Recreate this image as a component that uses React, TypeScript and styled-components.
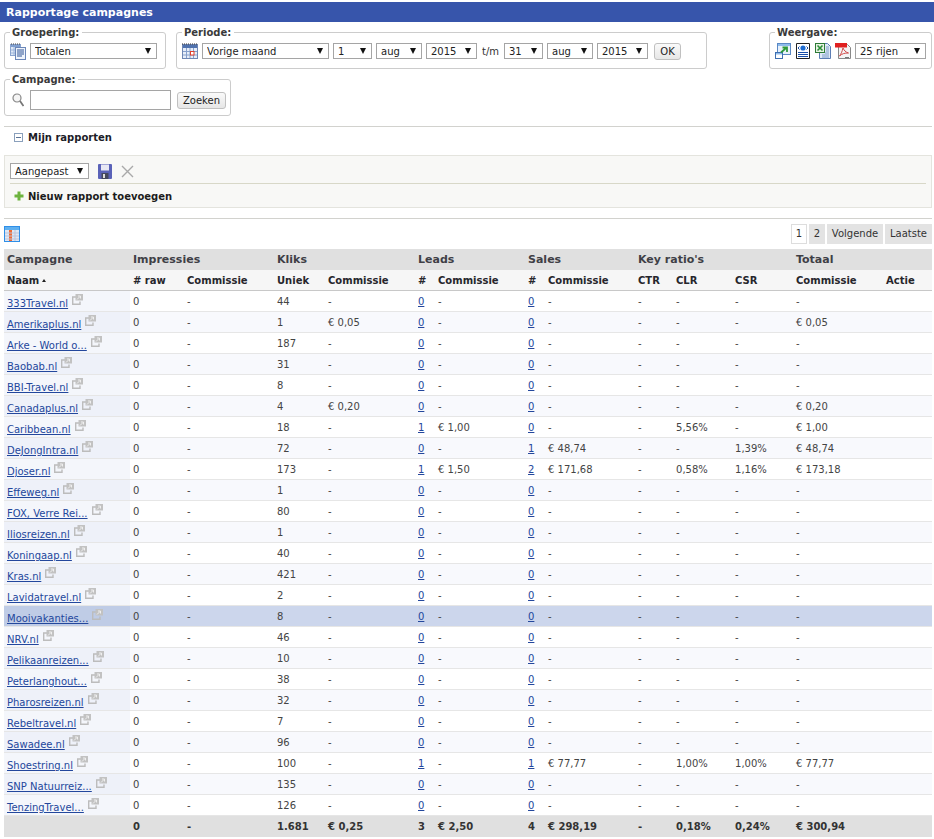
import React from 'react';
import styled, { createGlobalStyle } from 'styled-components';

const GlobalStyle = createGlobalStyle`
  html, body { margin: 0; padding: 0; background: #fff; }
  body { font-family: "DejaVu Sans", Verdana, sans-serif; font-size: 10px; color: #333; }
`;

const Page = styled.div`
  padding-top: 2px;
  width: 934px;
`;

const TitleBar = styled.h1`
  margin: 0;
  height: 20px;
  background: #3755ab;
  color: #fff;
  font-size: 11px;
  line-height: 21px;
  padding-left: 6px;
  font-weight: bold;
`;

const Content = styled.div`
  padding: 0 2px 0 4px;
`;

const FilterRow = styled.div`
  display: flex;
  gap: 10px;
  margin-top: 5px;
`;

const Group = styled.fieldset`
  box-sizing: border-box;
  width: ${p => p.$width}px;
  height: 42px;
  margin: 0;
  margin-left: ${p => (p.$push ? 'auto' : '0')};
  padding: 0 5px;
  border: 1px solid #ccc;
  border-radius: 3px;
  display: flex;
  align-items: center;
  min-width: 0;
`;

const Legend = styled.legend`
  font-weight: bold;
  font-size: 10px;
  color: #3a3a3a;
  padding: 0 3px 0 2px;
  line-height: 11px;
  height: 11px;
`;

const Controls = styled.div`
  display: flex;
  align-items: center;
  gap: ${p => p.$gap ?? 4}px;
  margin-top: ${p => p.$lift ?? -4}px;
`;

const SelectWrap = styled.span`
  position: relative;
  display: inline-block;
  width: ${p => p.$width}px;
  height: 16px;
  &::after {
    content: '';
    position: absolute;
    right: 6px;
    top: 5px;
    border-left: 3.5px solid transparent;
    border-right: 3.5px solid transparent;
    border-top: 6px solid #111;
    pointer-events: none;
  }
`;

const NativeSelect = styled.select`
  appearance: none;
  box-sizing: border-box;
  width: 100%;
  height: 100%;
  display: block;
  margin: 0;
  padding: 0 0 0 4px;
  border: 1px solid #a5a5a5;
  border-radius: 0;
  background: #fff;
  color: #222;
  font: 10px "DejaVu Sans", Verdana, sans-serif;
`;

const Button = styled.button`
  box-sizing: border-box;
  height: 17px;
  width: ${p => p.$width}px;
  margin: 0 0 0 ${p => p.$left || 0}px;
  padding: 0;
  border: 1px solid #c0c0c0;
  border-radius: 3px;
  background: linear-gradient(#fafafa, #e6e6e6);
  color: #222;
  font: 10px "DejaVu Sans", Verdana, sans-serif;
`;

const SearchInput = styled.input`
  box-sizing: border-box;
  width: 141px;
  height: 20px;
  margin: 0;
  border: 1px solid #a5a5a5;
  background: #fff;
`;

const SearchGlyph = styled.svg`
  margin-left: 2px;
`;

const Until = styled.span`
  color: #333;
  width: 19px;
  text-align: center;
`;

const Rule = styled.hr`
  border: 0;
  border-top: 1px solid #d2d2ce;
  margin: 10px 0 0;
  height: 0;
`;

const SectionHead = styled.div`
  display: flex;
  align-items: center;
  gap: 5px;
  height: 20px;
  padding-left: 10px;
  font-weight: bold;
  font-size: 10px;
  color: #1c1c28;
`;

const ReportPanel = styled.div`
  box-sizing: border-box;
  height: 53px;
  margin-top: 8px;
  padding: 7px 5px 0;
  background: #f8f8f6;
  border: 1px solid #e4e4de;
`;

const PanelRow = styled.div`
  display: flex;
  align-items: center;
  gap: 9px;
  height: 16px;
  padding-bottom: 4px;
  border-bottom: 1px solid #d8d8c8;
`;

const AddLink = styled.div`
  display: flex;
  align-items: center;
  gap: 4px;
  height: 24px;
  padding-left: 4px;
  font-weight: bold;
  font-size: 10px;
  color: #1c1c1c;
`;

const TableBar = styled.div`
  display: flex;
  justify-content: space-between;
  align-items: center;
  height: 30px;
`;

const Pager = styled.div`
  display: flex;
  gap: 2px;
`;

const PageLink = styled.span`
  box-sizing: border-box;
  width: ${p => p.$width}px;
  height: 20px;
  line-height: 18px;
  text-align: center;
  font-size: 10px;
  color: #333;
  background: ${p => (p.$active ? '#fff' : '#e3e3e3')};
  border: 1px solid ${p => (p.$active ? '#ddd' : '#e3e3e3')};
`;

const Table = styled.table`
  width: 928px;
  table-layout: fixed;
  border-collapse: collapse;
  border-spacing: 0;
  font-size: 10px;
`;

const GroupHead = styled.th`
  height: 21px;
  padding: 0 3px;
  background: #e0e0e0;
  color: #3f3f46;
  font-size: 11px;
  font-weight: bold;
  text-align: left;
`;

const SubHead = styled.th`
  height: 20px;
  padding: 0 3px;
  background: #f6f6f6;
  border-bottom: 1px solid #c8c8c8;
  color: #26262c;
  font-size: 10px;
  font-weight: bold;
  text-align: left;
  white-space: nowrap;
`;

const SortMark = styled.span`
  display: inline-block;
  margin-left: 3px;
  vertical-align: 2px;
  border-left: 2.5px solid transparent;
  border-right: 2.5px solid transparent;
  border-bottom: 3px solid #222;
`;

const Row = styled.tr`
  background: ${p => (p.$hot ? '#ccd6ec' : p.$even ? '#f8f9fd' : '#fff')};
`;

const Cell = styled.td`
  box-sizing: border-box;
  height: 21px;
  padding: 0 3px;
  border-bottom: 1px solid #e6e6e6;
  color: #444;
  white-space: nowrap;
`;

const NameCell = styled(Cell)`
  background: ${p => (p.$hot ? '#bfcce6' : p.$even ? '#eef1f9' : '#f4f6fb')};
  padding-top: 1px;
`;

const NameLink = styled.a`
  color: #23479c;
  text-decoration: underline;
`;

const External = styled.svg`
  margin-left: 4px;
  vertical-align: 2px;
`;

const CountLink = styled.a`
  color: #23479c;
  text-decoration: underline;
`;

const FootCell = styled.td`
  height: 21px;
  padding: 0 3px;
  background: #e0e0e0;
  border-top: 1px solid #c4c4c4;
  color: #333;
  font-weight: bold;
  white-space: nowrap;
`;

const ReportIcon = () => (
  <svg width="16" height="17" viewBox="0 0 16 17">
    <rect x="0.5" y="1.5" width="10" height="11" fill="#dfe9f7" stroke="#8aa4cf" />
    <path d="M1 1h10" stroke="#444" strokeDasharray="1 1" />
    <rect x="1" y="2" width="9" height="2" fill="#7f9fd0" />
    <path d="M4 4v8M7 4v8M1 7h9M1 10h9" stroke="#9db5da" />
    <rect x="5.500" y="4.500" width="10" height="12" fill="#eef3fb" stroke="#6a86b8" />
    <path d="M7 7h7M7 9h7M7 11h7M7 13h5" stroke="#2e5596" strokeWidth="1.100" />
  </svg>
);

const CalendarIcon = () => (
  <svg width="16" height="16" viewBox="0 0 16 16">
    <rect x="0.5" y="1.5" width="15" height="14" fill="#e6edf8" stroke="#6f87b4" />
    <rect x="1" y="2" width="14" height="3" fill="#4f72ae" />
    <path d="M0 1h16" stroke="#333" strokeDasharray="1 1" />
    <path d="M4.5 5v10M8 5v10M11.5 5v10M1 8.5h14M1 12h14" stroke="#86a0cc" />
    <rect x="8.500" y="8.500" width="3.500" height="3.500" fill="#fff" stroke="#e0402c" />
  </svg>
);

const SearchIcon = () => (
  <SearchGlyph width="12" height="14" viewBox="0 0 12 14">
    <circle cx="5" cy="5" r="4" fill="#f5f5f5" stroke="#888" strokeWidth="1.2" />
    <path d="M8 8l3.500 5" stroke="#777" strokeWidth="1.800" />
  </SearchGlyph>
);

const WindowIcon = () => (
  <svg width="16" height="16" viewBox="0 0 16 16">
    <rect x="2.500" y="0.500" width="13" height="11" fill="#e8f1fb" stroke="#5a88c4" />
    <rect x="3" y="1" width="12" height="2" fill="#8fbcec" />
    <rect x="0.500" y="9.500" width="7" height="6" fill="#fff" stroke="#3f6fb0" />
    <rect x="1" y="10" width="6" height="1.500" fill="#8fbcec" />
    <path d="M6 9.500l5-4.500M7.500 4.500h4.500V9" stroke="#2e9a3a" strokeWidth="1.800" fill="none" />
  </svg>
);

const WebIcon = () => (
  <svg width="16" height="16" viewBox="0 0 16 16">
    <path d="M1.500 .5h13v15h-13z" fill="#fff" stroke="#222" />
    <circle cx="8" cy="5" r="2.600" fill="#1b6ad0" />
    <path d="M3 5l1.500-1.500M3 5l1.500 1.500M13 5l-1.500-1.500M13 5l-1.500 1.500" stroke="#1b4fa8" />
    <path d="M3 9.500h10M3 11.500h10M3 13.500h10" stroke="#1b4fa8" />
  </svg>
);

const ExcelIcon = () => (
  <svg width="16" height="16" viewBox="0 0 16 16">
    <path d="M4.500 .5h8l3 3v12h-11z" fill="#dfe9f6" stroke="#5b7db4" />
    <path d="M10 10h4M7 12h7M7 14h7M11 4h3M11 6h3M11 8h3" stroke="#7c9cc8" />
    <rect x="0.500" y="0.500" width="9" height="9" fill="#e8f2e4" stroke="#2c7a35" />
    <path d="M2.500 2.500l5 5M7.500 2.500l-5 5" stroke="#2c8f38" strokeWidth="1.600" />
  </svg>
);

const PdfIcon = () => (
  <svg width="16" height="16" viewBox="0 0 16 16">
    <path d="M3.500 1.500h9l3 3v11h-12z" fill="#f4f4f4" stroke="#888" />
    <rect x="0" y="0" width="12" height="4.500" fill="#e02020" />
    <path d="M8 5c-1 4-2 6-3.500 8 3-2.500 5-3 9-3-3-1-4.500-2.500-5.500-5z" fill="none" stroke="#d04a4a" />
    <path d="M10 14.500h4" stroke="#777" />
  </svg>
);

const MinusBox = () => (
  <svg width="9" height="9" viewBox="0 0 9 9">
    <rect x="0.5" y="0.5" width="8" height="8" fill="#fff" stroke="#8aa0bc" />
    <path d="M2 4.500h5" stroke="#5a7396" />
  </svg>
);

const SaveIcon = () => (
  <svg width="14" height="15" viewBox="0 0 14 15">
    <rect x="0" y="0" width="14" height="15" rx="1" fill="#5a62b8" />
    <rect x="3" y="0.500" width="8" height="6" fill="#e8e8f4" />
    <rect x="3.500" y="9" width="7" height="6" fill="#44485c" />
    <rect x="5" y="10" width="2" height="4" fill="#ddd" />
  </svg>
);

const CrossIcon = () => (
  <svg width="13" height="13" viewBox="0 0 13 13">
    <path d="M1 1l11 11M12 1L1 12" stroke="#a9a9a9" strokeWidth="1.400" />
  </svg>
);

const PlusIcon = () => (
  <svg width="10" height="10" viewBox="0 0 10 10">
    <path d="M5 .5v9M.5 5h9" stroke="#6db33f" strokeWidth="3" />
  </svg>
);

const ColumnsIcon = () => (
  <svg width="16" height="16" viewBox="0 0 16 16">
    <rect x="0.500" y="0.500" width="15" height="15" fill="#dfe6f2" stroke="#2f8fe8" />
    <rect x="1" y="1" width="14" height="3" fill="#5fb0f0" />
    <rect x="5" y="4" width="3" height="11" fill="#ef6a35" />
    <path d="M11 4v11M1 7h14M1 10h14M1 13h14" stroke="#b9c3dc" />
  </svg>
);

const ExternalIcon = () => (
  <External width="11" height="11" viewBox="0 0 11 11">
    <path d="M4 3H.7v7.300H8V7.500" fill="none" stroke="#bcbcbc" strokeWidth="1.400" />
    <rect x="3.500" y="0" width="7.500" height="6.500" fill="#c2c2c2" />
    <path d="M5 5.500l3-3M6 2h2.500v2.500" stroke="#efefef" strokeWidth="1" fill="none" />
  </External>
);

const colWidths = [126, 54, 90, 51, 90, 20, 90, 20, 90, 38, 59, 61, 90, 49];

type CampaignRow = {
  name: string;
  clicks: string;
  clickFee?: string;
  leads?: string;
  leadFee?: string;
  sales?: string;
  saleFee?: string;
  clr?: string;
  csr?: string;
  total?: string;
};

const rows: CampaignRow[] = [
  { name: '333Travel.nl', clicks: '44' },
  { name: 'Amerikaplus.nl', clicks: '1', clickFee: '€ 0,05', total: '€ 0,05' },
  { name: 'Arke - World o...', clicks: '187' },
  { name: 'Baobab.nl', clicks: '31' },
  { name: 'BBI-Travel.nl', clicks: '8' },
  { name: 'Canadaplus.nl', clicks: '4', clickFee: '€ 0,20', total: '€ 0,20' },
  { name: 'Caribbean.nl', clicks: '18', leads: '1', leadFee: '€ 1,00', clr: '5,56%', total: '€ 1,00' },
  { name: 'DeJongIntra.nl', clicks: '72', sales: '1', saleFee: '€ 48,74', csr: '1,39%', total: '€ 48,74' },
  { name: 'Djoser.nl', clicks: '173', leads: '1', leadFee: '€ 1,50', sales: '2', saleFee: '€ 171,68', clr: '0,58%', csr: '1,16%', total: '€ 173,18' },
  { name: 'Effeweg.nl', clicks: '1' },
  { name: 'FOX, Verre Rei...', clicks: '80' },
  { name: 'Iliosreizen.nl', clicks: '1' },
  { name: 'Koningaap.nl', clicks: '40' },
  { name: 'Kras.nl', clicks: '421' },
  { name: 'Lavidatravel.nl', clicks: '2' },
  { name: 'Mooivakanties...', clicks: '8' },
  { name: 'NRV.nl', clicks: '46' },
  { name: 'Pelikaanreizen...', clicks: '10' },
  { name: 'Peterlanghout...', clicks: '38' },
  { name: 'Pharosreizen.nl', clicks: '32' },
  { name: 'Rebeltravel.nl', clicks: '7' },
  { name: 'Sawadee.nl', clicks: '96' },
  { name: 'Shoestring.nl', clicks: '100', leads: '1', sales: '1', saleFee: '€ 77,77', clr: '1,00%', csr: '1,00%', total: '€ 77,77' },
  { name: 'SNP Natuurreiz...', clicks: '135' },
  { name: 'TenzingTravel...', clicks: '126' },
];

const Select = ({ value, width }: { value: string; width: number }) => (
  <SelectWrap $width={width}>
    <NativeSelect defaultValue={value}>
      <option>{value}</option>
    </NativeSelect>
  </SelectWrap>
);

export default function App() {
  return (
    <Page>
      <GlobalStyle />
      <TitleBar>Rapportage campagnes</TitleBar>
      <Content>
        <FilterRow>
          <Group $width={162}>
            <Legend>Groepering:</Legend>
            <Controls>
              <ReportIcon />
              <Select value="Totalen" width={127} />
            </Controls>
          </Group>
          <Group $width={531}>
            <Legend>Periode:</Legend>
            <Controls>
              <CalendarIcon />
              <Select value="Vorige maand" width={127} />
              <Select value="1" width={39} />
              <Select value="aug" width={46} />
              <Select value="2015" width={51} />
              <Until>t/m</Until>
              <Select value="31" width={39} />
              <Select value="aug" width={46} />
              <Select value="2015" width={51} />
              <Button $width={27} $left={2}>OK</Button>
            </Controls>
          </Group>
          <Group $width={163} $push>
            <Legend>Weergave:</Legend>
            <Controls>
              <WindowIcon />
              <WebIcon />
              <ExcelIcon />
              <PdfIcon />
              <Select value="25 rijen" width={71} />
            </Controls>
          </Group>
        </FilterRow>
        <FilterRow>
          <Group $width={227}>
            <Legend>Campagne:</Legend>
            <Controls $gap={6} $lift={0}>
              <SearchIcon />
              <SearchInput />
              <Button $width={49}>Zoeken</Button>
            </Controls>
          </Group>
        </FilterRow>
        <Rule />
        <SectionHead>
          <MinusBox />
          Mijn rapporten
        </SectionHead>
        <ReportPanel>
          <PanelRow>
            <Select value="Aangepast" width={79} />
            <SaveIcon />
            <CrossIcon />
          </PanelRow>
          <AddLink>
            <PlusIcon />
            Nieuw rapport toevoegen
          </AddLink>
        </ReportPanel>
        <Rule />
        <TableBar>
          <ColumnsIcon />
          <Pager>
            <PageLink $active $width={16}>1</PageLink>
            <PageLink $width={16}>2</PageLink>
            <PageLink $width={56}>Volgende</PageLink>
            <PageLink $width={47}>Laatste</PageLink>
          </Pager>
        </TableBar>
        <Table>
          <colgroup>
            {colWidths.map((w, i) => (
              <col key={i} width={w} />
            ))}
          </colgroup>
          <thead>
            <tr>
              <GroupHead>Campagne</GroupHead>
              <GroupHead colSpan={2}>Impressies</GroupHead>
              <GroupHead colSpan={2}>Kliks</GroupHead>
              <GroupHead colSpan={2}>Leads</GroupHead>
              <GroupHead colSpan={2}>Sales</GroupHead>
              <GroupHead colSpan={3}>Key ratio's</GroupHead>
              <GroupHead colSpan={2}>Totaal</GroupHead>
            </tr>
            <tr>
              <SubHead>Naam<SortMark /></SubHead>
              <SubHead># raw</SubHead>
              <SubHead>Commissie</SubHead>
              <SubHead>Uniek</SubHead>
              <SubHead>Commissie</SubHead>
              <SubHead>#</SubHead>
              <SubHead>Commissie</SubHead>
              <SubHead>#</SubHead>
              <SubHead>Commissie</SubHead>
              <SubHead>CTR</SubHead>
              <SubHead>CLR</SubHead>
              <SubHead>CSR</SubHead>
              <SubHead>Commissie</SubHead>
              <SubHead>Actie</SubHead>
            </tr>
          </thead>
          <tbody>
            {rows.map((r, i) => {
              const even = i % 2 === 1;
              const hot = r.name.startsWith('Mooivakanties');
              return (
                <Row key={r.name} $even={even} $hot={hot}>
                  <NameCell $even={even} $hot={hot}>
                    <NameLink href="#">{r.name}</NameLink>
                    <ExternalIcon />
                  </NameCell>
                  <Cell>0</Cell>
                  <Cell>-</Cell>
                  <Cell>{r.clicks}</Cell>
                  <Cell>{r.clickFee || '-'}</Cell>
                  <Cell><CountLink href="#">{r.leads || '0'}</CountLink></Cell>
                  <Cell>{r.leadFee || '-'}</Cell>
                  <Cell><CountLink href="#">{r.sales || '0'}</CountLink></Cell>
                  <Cell>{r.saleFee || '-'}</Cell>
                  <Cell>-</Cell>
                  <Cell>{r.clr || '-'}</Cell>
                  <Cell>{r.csr || '-'}</Cell>
                  <Cell>{r.total || '-'}</Cell>
                  <Cell />
                </Row>
              );
            })}
          </tbody>
          <tfoot>
            <tr>
              <FootCell />
              <FootCell>0</FootCell>
              <FootCell>-</FootCell>
              <FootCell>1.681</FootCell>
              <FootCell>€ 0,25</FootCell>
              <FootCell>3</FootCell>
              <FootCell>€ 2,50</FootCell>
              <FootCell>4</FootCell>
              <FootCell>€ 298,19</FootCell>
              <FootCell>-</FootCell>
              <FootCell>0,18%</FootCell>
              <FootCell>0,24%</FootCell>
              <FootCell>€ 300,94</FootCell>
              <FootCell />
            </tr>
          </tfoot>
        </Table>
      </Content>
    </Page>
  );
}
